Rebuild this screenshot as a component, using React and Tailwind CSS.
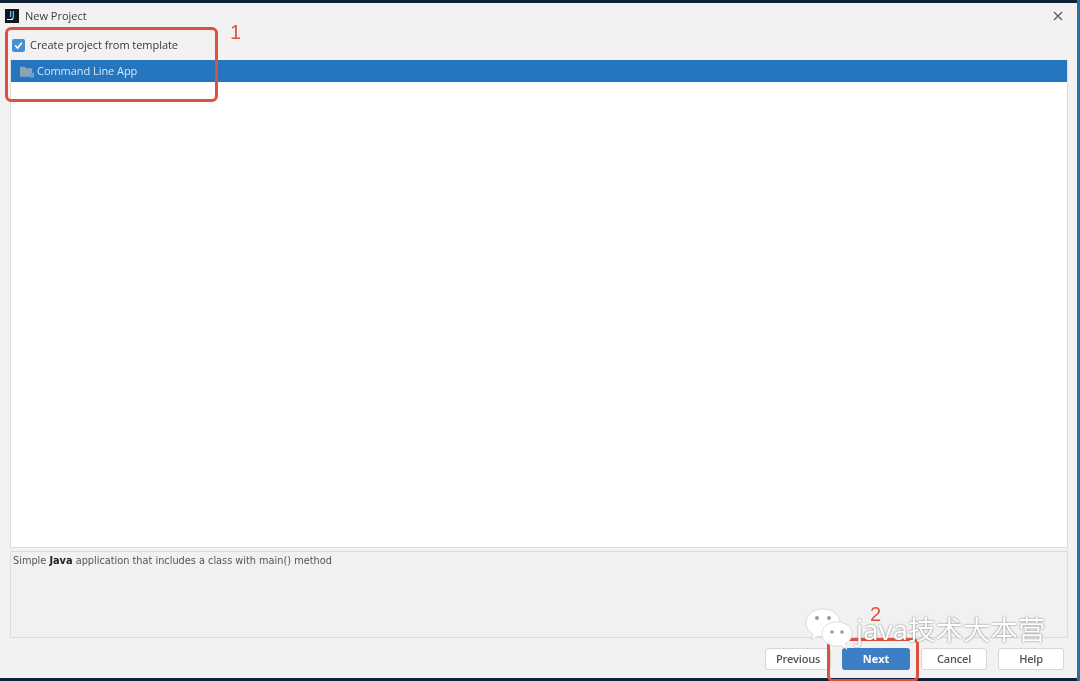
const uiFont = { fontFamily: '"Open Sans", "Noto Sans", sans-serif' };

const DialogButton = ({ label, primary }) => (
  <button
    type="button"
    className={
      primary
        ? "h-[22px] w-[68px] rounded-[3px] bg-[#3d7fc4] text-[11px] font-bold text-white"
        : "h-[22px] w-[66px] rounded-[3px] border border-[#d6d6d6] bg-white text-[11px] font-semibold tracking-[-0.2px] text-[#555]"
    }
  >
    {label}
  </button>
);

const WeChatMark = () => (
  <svg width="50" height="44" viewBox="0 0 50 44" className="block">
    <path d="M19 1C9 1 2 7 2 15c0 5 3 9 7 11l-2 6 7-4c2 .5 3 .5 5 .5 10 0 17-6 17-13.500S29 1 19 1z" fill="#fff" stroke="#c8c8c8" strokeWidth="0.6" />
    <circle cx="13" cy="10" r="2" fill="#9a9a9a" />
    <circle cx="25" cy="10" r="2" fill="#9a9a9a" />
    <path d="M33 14c-9 0-15 5-15 12s6 12 15 12c2 0 3 0 4-.5l6 4-1.500-6c4-2 6.500-5.500 6.500-9.500 0-7-6-12-15-12z" fill="#fff" stroke="#c8c8c8" strokeWidth="0.6" />
    <circle cx="28" cy="24" r="1.800" fill="#9a9a9a" />
    <circle cx="38" cy="24" r="1.800" fill="#9a9a9a" />
  </svg>
);

export default function App() {
  return (
    <div className="relative flex h-[681px] w-[1080px] flex-col overflow-hidden bg-[#f2f2f2] py-[3px] pr-[3px] blur-[0.4px]" style={uiFont}>
      <div className="absolute inset-x-0 top-0 h-[3px] bg-[#0f2236]" />
      <div className="absolute inset-x-0 bottom-0 h-[3px] bg-[#0f2236]" />
      <div className="absolute inset-y-0 right-0 w-[3px] bg-[#2a6f9e]" />

      {/* title bar */}
      <div className="flex h-[26px] shrink-0 items-center pr-[14px] pl-[5px]">
        <div className="flex h-[14px] w-[14px] flex-col items-center bg-[#10161f] pt-[1px] text-[8px] leading-[8px] font-bold text-[#6fc3f0]">
          <span>IJ</span>
          <span className="mt-[1px] ml-[2px] h-px w-[6px] self-start bg-white" />
        </div>
        <span className="ml-[6px] text-[11px] text-[#3c3c3c]">New Project</span>
        <svg width="10" height="10" viewBox="0 0 10 10" className="ml-auto">
          <path d="M1 1l8 8M9 1l-8 8" stroke="#555" strokeWidth="1.200" />
        </svg>
      </div>

      {/* template checkbox */}
      <div className="flex h-[31px] shrink-0 items-center pt-[1px] pl-[12px]">
        <div className="flex h-[13px] w-[13px] items-center justify-center rounded-[2px] bg-[#4a8fd0]">
          <svg width="11" height="11" viewBox="0 0 10 10">
            <path d="M2 5l2.200 2.300L8 2.500" fill="none" stroke="#fff" strokeWidth="1.500" />
          </svg>
        </div>
        <span className="ml-[5px] text-[11px] font-medium tracking-[-0.05px] text-[#3a3a3a]">Create project from template</span>
      </div>

      {/* template list */}
      <div className="mr-[9px] ml-[10px] h-[488px] shrink-0 border-r border-b border-l border-[#dcdcdc] bg-white">
        <div className="flex h-[22px] items-center bg-[#2675bf] pl-[9px]">
          <svg width="14" height="13" viewBox="0 0 15 13">
            <path d="M0 1.500h5l1.500 1.500H13v9H0z" fill="#8fa3b5" />
            <rect x="10" y="8" width="5" height="5" fill="#5aa6e0" />
          </svg>
          <span className="ml-[3px] text-[11px] font-medium tracking-[-0.05px] text-[#d6e8f8]">Command Line App</span>
        </div>
      </div>

      {/* description */}
      <div className="mt-[3px] mr-[9px] ml-[10px] h-[87px] shrink-0 border border-[#dcdcdc] bg-[#f1f1f1] p-[2px] text-[9.750px] leading-[14px] text-[#555]" style={{ fontFamily: '"DejaVu Sans", sans-serif' }}>
        Simple <b className="text-[#222]">Java</b> application that includes a class with main() method
      </div>

      {/* buttons */}
      <div className="mt-[10px] flex items-center justify-end gap-[11px] pr-[13px]">
        <DialogButton label="Previous" />
        <DialogButton label="Next" primary />
        <DialogButton label="Cancel" />
        <DialogButton label="Help" />
      </div>

      {/* red annotations */}
      <div className="absolute top-[27px] left-[5px] h-[75px] w-[213px] rounded-[6px] border-[3px] border-[#e0503f]" />
      <span className="absolute top-[19px] left-[230px] text-[20px] leading-[26px] text-[#e2503f]" style={{ fontFamily: '"Liberation Sans", sans-serif' }}>1</span>
      <div className="absolute top-[638px] left-[827px] h-[44px] w-[92px] rounded-[6px] border-[3px] border-[#e0503f]" />
      <span className="absolute top-[607px] left-[870px] text-[20px] leading-[14px] text-[#e2503f]" style={{ fontFamily: '"Liberation Sans", sans-serif' }}>2</span>

      {/* watermark */}
      <div className="absolute top-[608px] left-[804px] flex items-center">
        <WeChatMark />
        <span className="ml-[2px] text-[27.500px] leading-[20px] text-white [text-shadow:0_0_2px_#666]" style={{ fontFamily: '"Noto Sans", "Noto Sans CJK SC", sans-serif' }}>java技术大本营</span>
      </div>
    </div>
  );
}
